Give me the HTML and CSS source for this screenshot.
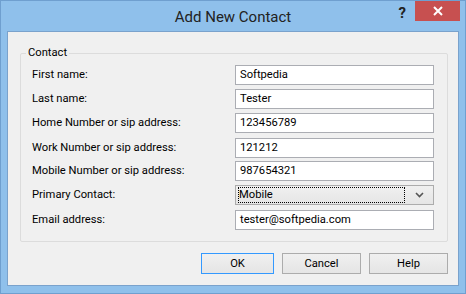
FILE: index.html
```html
<!DOCTYPE html>
<html lang="en">
<head>
    <meta charset="UTF-8">
    <title>Add New Contact</title>
    <link rel="stylesheet" href="styles.css">
</head>
<body>
    <div class="window">
        <div class="titlebar">
            <div class="title">Add New Contact</div>
            <div class="help-btn">?</div>
            <div class="close-btn">
                <svg width="10" height="10" viewBox="0 0 10 10"><path d="M1 1 L9 9 M9 1 L1 9" stroke="#fff" stroke-width="2"/></svg>
            </div>
        </div>
        <div class="client">
            <fieldset class="group">
                <legend>Contact</legend>
                <div class="form">
                    <label>First name:</label>
                    <div class="field">Softpedia</div>
                    <label>Last name:</label>
                    <div class="field">Tester</div>
                    <label>Home Number or sip address:</label>
                    <div class="field">123456789</div>
                    <label class="gap">Work Number or sip address:</label>
                    <div class="field gap">121212</div>
                    <label>Mobile Number or sip address:</label>
                    <div class="field">987654321</div>
                    <label>Primary Contact:</label>
                    <div class="select">
                        <span class="focus">Mobile</span>
                        <svg class="chevron" width="9" height="6" viewBox="0 0 9 6"><path d="M1 1 L4.5 4.5 L8 1" fill="none" stroke="#555" stroke-width="1.6"/></svg>
                    </div>
                    <label class="gap2">Email address:</label>
                    <div class="field gap2">tester@softpedia.com</div>
                </div>
            </fieldset>
            <div class="buttons">
                <button class="btn default">OK</button>
                <button class="btn">Cancel</button>
                <button class="btn">Help</button>
            </div>
        </div>
    </div>
</body>
</html>
```

FILE: styles.css
```css
body {
    margin: 0;
    font-family: Roboto, "Noto Sans", sans-serif;
    font-size: 11.2px;
    color: #000;
}
.window {
    width: 466px;
    height: 294px;
    box-sizing: border-box;
    background-color: #8fc0eb;
    border: 1px solid #6f9fcf;
    padding: 0 6px 7px 6px;
    display: flex;
    flex-direction: column;
}
.titlebar {
    height: 30px;
    position: relative;
    display: flex;
    justify-content: center;
    align-items: center;
}
.title {
    font-size: 15px;
    color: #222;
    margin-top: 1px;
}
.help-btn {
    position: absolute;
    right: 53px;
    top: 3px;
    font-size: 15px;
    font-weight: bold;
    color: #222;
}
.close-btn {
    position: absolute;
    right: -1px;
    top: 0;
    width: 45px;
    height: 20px;
    background-color: #c75050;
    display: flex;
    justify-content: center;
    align-items: center;
}
.client {
    flex: 1;
    background-color: #f0f0f0;
    border: 1px solid #7aa2cc;
    padding: 13px 10px 0 12px;
}
.group {
    margin: 0;
    padding: 0 13px 12px 11px;
    border: 1px solid #dcdcdc;
    border-radius: 2px;
}
.group legend {
    margin-left: -6px;
    padding: 0 2px;
    line-height: 16px;
}
.form {
    display: grid;
    grid-template-columns: 1fr 199px;
    grid-auto-rows: 20px;
    row-gap: 4px;
    align-items: center;
    margin-top: 4px;
}
.form label {
    line-height: 20px;
}
.form .gap {
    margin-top: 1px;
}
.form .gap2 {
    margin-top: 2px;
}
.field {
    height: 20px;
    box-sizing: border-box;
    background-color: #fff;
    border: 1px solid #abadb3;
    padding: 0 4px;
    line-height: 18px;
}
.select {
    height: 20px;
    box-sizing: border-box;
    border: 1px solid #acacac;
    background: linear-gradient(#f0f0f0, #e5e5e5);
    padding: 1px 2px;
    display: flex;
    align-items: center;
}
.select .focus {
    flex: 1;
    height: 16px;
    box-sizing: border-box;
    border: 1px dotted #000;
    line-height: 14px;
    padding-left: 0;
}
.select .chevron {
    margin: 0 7px 0 10px;
}
.buttons {
    display: flex;
    justify-content: flex-end;
    gap: 8px;
    margin-top: 11px;
}
.btn {
    font-family: inherit;
    font-size: 11.2px;
    height: 21px;
    width: 79px;
    padding: 0;
    border: 1px solid #acacac;
    background: linear-gradient(#f0f0f0, #e5e5e5);
    color: #000;
}
.btn.default {
    width: 73px;
    border-color: #3399ff;
}
```
